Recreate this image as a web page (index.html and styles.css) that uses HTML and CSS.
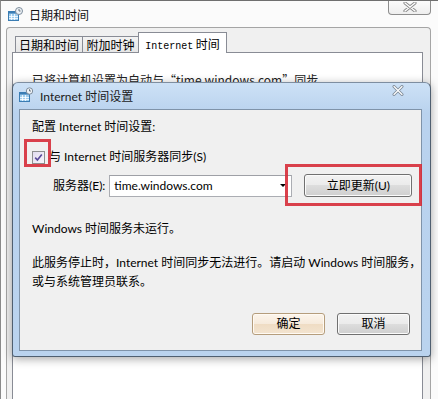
FILE: index.html
```html
<!DOCTYPE html>
<html lang="zh-CN">
<head>
<meta charset="utf-8">
<title>日期和时间</title>
<link rel="stylesheet" href="styles.css">
</head>
<body>
<div class="win">
  <div class="titlebar">
    <svg class="appicon" width="15" height="15" viewBox="0 0 15 15">
      <rect x="0.5" y="4.5" width="10" height="9" fill="#9fcdee" stroke="#3b7db3"/>
      <rect x="0.5" y="4.5" width="10" height="2" fill="#3b7db3"/>
      <path d="M3.5 7v6M6.5 7v6M1 9.5h9M1 11.5h9" stroke="#ffffff" stroke-width="0.8"/>
      <circle cx="11" cy="4" r="3.5" fill="#eef2f6" stroke="#7c8c9c"/>
      <path d="M11 2v2h1.6" stroke="#4a5a6a" stroke-width="0.8" fill="none"/>
    </svg>
    <span class="title">日期和时间</span>
    <div class="closebtn">
      <svg width="14" height="10" viewBox="0 0 14 10">
        <path d="M2 1l10 8M12 1L2 9" stroke="#8a8a8a" stroke-width="3.2" stroke-linecap="round"/>
        <path d="M2 1l10 8M12 1L2 9" stroke="#ffffff" stroke-width="1.4" stroke-linecap="round"/>
      </svg>
    </div>
  </div>
  <div class="client">
    <div class="tabs">
      <div class="tab tab-date">日期和时间</div>
      <div class="tab tab-clock">附加时钟</div>
      <div class="tab tab-inet active"><span class="mono">Internet</span> 时间</div>
    </div>
    <div class="panel">
      <p class="bgtext">已将计算机设置为自动与“time.windows.com”同步。</p>
    </div>
  </div>

  <div class="dialog">
    <div class="dtitle">
      <svg class="dicon" width="14" height="16" viewBox="0 0 14 16">
        <rect x="0.5" y="5.5" width="10" height="9" fill="#9fcdee" stroke="#3b7db3"/>
        <rect x="0.5" y="5.5" width="10" height="2" fill="#3b7db3"/>
        <path d="M3.5 8v6M6.5 8v6M1 10.5h9M1 12.5h9" stroke="#ffffff" stroke-width="0.8"/>
        <circle cx="10.5" cy="4" r="3.2" fill="#eef2f6" stroke="#7c8c9c"/>
        <path d="M10.5 2.2v1.8h1.5" stroke="#4a5a6a" stroke-width="0.8" fill="none"/>
      </svg>
      <span class="dtext">Internet 时间设置</span>
      <svg class="dclose" width="12" height="11" viewBox="0 0 12 11">
        <path d="M2 1.5l8 8M10 1.5l-8 8" stroke="#7d8a98" stroke-width="3" stroke-linecap="round"/>
        <path d="M2 1.5l8 8M10 1.5l-8 8" stroke="#ffffff" stroke-width="1.2" stroke-linecap="round"/>
      </svg>
    </div>
    <div class="dbody">
      <div class="heading">配置 Internet 时间设置:</div>
      <div class="checkrow">
        <span class="cbwrap">
          <span class="cb">
            <svg width="11" height="11" viewBox="0 0 11 11"><path d="M2.2 5.6l2.2 2.4 4.4-5.6" stroke="#5a4a9a" stroke-width="1.6" fill="none"/></svg>
          </span>
          <span class="hl hl-cb"></span>
        </span>
        <span class="cblabel">与 Internet 时间服务器同步(S)</span>
      </div>
      <div class="serverrow">
        <span class="slabel">服务器(E):</span>
        <div class="combo"><span class="ctext">time.windows.com</span><span class="arrow"></span></div>
        <span class="btnwrap">
          <button class="btn btn-update">立即更新(U)</button>
          <span class="hl hl-btn"></span>
        </span>
      </div>
      <p class="status">Windows 时间服务未运行。</p>
      <p class="desc">此服务停止时，Internet 时间同步无法进行。请启动 Windows 时间服务，<br>或与系统管理员联系。</p>
      <div class="actions">
        <button class="btn btn-default">确定</button>
        <button class="btn">取消</button>
      </div>
    </div>
  </div>
</div>
</body>
</html>
```
FILE: styles.css
```css
* { box-sizing: border-box; }
html, body { margin: 0; padding: 0; }
body {
  width: 438px;
  height: 399px;
  overflow: hidden;
  background: #ffffff;
  font-family: "Lato", "Noto Sans CJK SC", sans-serif;
  font-size: 12px;
  color: #000;
}
p { margin: 0; white-space: nowrap; }

.win {
  position: relative;
  width: 438px;
  height: 399px;
  border-top: 1px solid #6f6f6f;
  border-left: 1px solid #8a8a8a;
  background: #fbfbfb;
  overflow: hidden;
}

.titlebar {
  display: flex;
  align-items: flex-start;
  height: 26px;
}
.appicon { margin: 6px 0 0 7px; flex: none; }
.title {
  margin: 6px 0 0 6px;
  line-height: 16px;
  font-family: "Noto Sans CJK SC", sans-serif;
  color: #111;
}
.closebtn {
  margin: -1px 7px 0 auto;
  width: 43px;
  height: 15px;
  border: 1px solid #8d8d8d;
  border-top: none;
  border-radius: 0 0 4px 4px;
  background: linear-gradient(#fdfdfd, #eeeeee);
  display: flex;
  align-items: center;
  justify-content: center;
}

.client {
  margin: 0 7px 0 5px;
  height: 380px;
  border: 1px solid #a5a5a5;
  border-bottom: none;
  border-radius: 4px 4px 0 0;
  background: #f0f0f0;
  padding: 4px 7px 0 5px;
  display: flex;
  flex-direction: column;
}

.tabs {
  display: flex;
  align-items: flex-start;
  height: 21px;
  padding-left: 3px;
  font-family: "Noto Sans CJK SC", sans-serif;
}
.tab {
  margin-top: 4px;
  height: 16px;
  border: 1px solid #898c95;
  border-bottom: none;
  border-right: none;
  background: linear-gradient(#f3f3f3, #e6e6e6);
  text-align: center;
  line-height: 15px;
  color: #000;
  white-space: nowrap;
}
.tab-date { width: 67px; }
.tab-clock { width: 56px; }
.tab.active {
  position: relative;
  z-index: 1;
  margin-top: 0;
  width: 89px;
  height: 21px;
  border-right: 1px solid #898c95;
  background: #ffffff;
  line-height: 19px;
  padding-top: 1px;
}
.mono { font-family: "Liberation Mono", monospace; font-size: 10px; }

.panel {
  margin-top: -1px;
  flex: 1;
  background: #ffffff;
  border: 1px solid #898c95;
  padding: 19px 0 0 19px;
}
.bgtext {
  line-height: 16px;
  font-family: "Noto Sans CJK SC", sans-serif;
  color: #222;
}

/* dialog floating over the window */
.dialog {
  position: absolute;
  left: 11px;
  top: 81px;
  width: 419px;
  height: 275px;
  border: 1px solid #4f5f70;
  border-top-color: #7e8ea0;
  border-radius: 6px 6px 3px 3px;
  background: linear-gradient(#cde1f6, #b9d2ee 30px, #bad3ee);
  padding: 0 8px 5px 6px;
  box-shadow: 0 2px 10px rgba(0, 0, 0, 0.35);
  display: flex;
  flex-direction: column;
}
.dtitle {
  height: 26px;
  display: flex;
  align-items: flex-start;
  flex: none;
}
.dicon { margin: 4px 0 0 0; flex: none; }
.dtext {
  margin: 6px 0 0 7px;
  line-height: 16px;
  color: #1a1a1a;
}
.dclose { margin: 2px 18px 0 auto; flex: none; }

.dbody {
  flex: 1;
  border: 1px solid #7f93a9;
  background: #f0f0f0;
  padding: 9px 10px 0 12px;
  display: flex;
  flex-direction: column;
}
.heading { line-height: 16px; white-space: nowrap; }

.checkrow {
  margin-top: 14px;
  display: flex;
  align-items: center;
  height: 16px;
}
.cbwrap { position: relative; width: 13px; height: 13px; flex: none; }
.cb {
  display: flex;
  align-items: center;
  justify-content: center;
  width: 13px;
  height: 13px;
  border: 1px solid #8e8f8f;
  background: linear-gradient(135deg, #e2dcef, #f7f5fb);
}
.cblabel { margin-left: 4px; line-height: 16px; white-space: nowrap; }

.hl {
  position: absolute;
  border: 3px solid rgba(214, 44, 56, 0.9);
  pointer-events: none;
}
.hl-cb { left: -8px; top: -12px; width: 27px; height: 28px; }

.serverrow {
  margin-top: 9px;
  display: flex;
  align-items: center;
  height: 23px;
}
.slabel { margin-left: 21px; line-height: 16px; white-space: nowrap; flex: none; }
.combo {
  flex: none;
  margin-left: 4px;
  width: 183px;
  height: 22px;
  border: 1px solid #abadb3;
  border-top-color: #9ea0a6;
  background: #ffffff;
  display: flex;
  align-items: center;
  padding-left: 4px;
}
.ctext { flex: 1; white-space: nowrap; }
.arrow {
  margin-right: 5px;
  width: 0;
  height: 0;
  border-left: 3px solid transparent;
  border-right: 3px solid transparent;
  border-top: 3px solid #000;
}
.btnwrap { position: relative; margin-left: 12px; display: flex; flex: none; }
.hl-btn { left: -19px; top: -10px; width: 137px; height: 42px; }

.btn {
  height: 23px;
  padding: 0;
  border: 1px solid #707070;
  border-radius: 3px;
  background: linear-gradient(#f2f2f2 0%, #ebebeb 50%, #dddddd 50%, #cfcfcf 100%);
  box-shadow: inset 0 0 0 1px #fbfbfb;
  font: inherit;
  color: #000;
  line-height: 20px;
  white-space: nowrap;
}
.btn-update { width: 108px; }

.status { margin-top: 22px; line-height: 19px; }
.desc { margin-top: 15px; line-height: 19px; }

.actions {
  margin-top: 22px;
  display: flex;
  justify-content: flex-end;
  gap: 12px;
  padding-right: 1px;
}
.actions .btn { width: 73px; height: 22px; }
.btn-default {
  border-color: #b59d7c;
  background: linear-gradient(#fcf5ec 0%, #f6eadb 50%, #efdcc3 50%, #f3e4d0 100%);
  box-shadow: inset 0 0 0 1px #fffaf3;
}
```
